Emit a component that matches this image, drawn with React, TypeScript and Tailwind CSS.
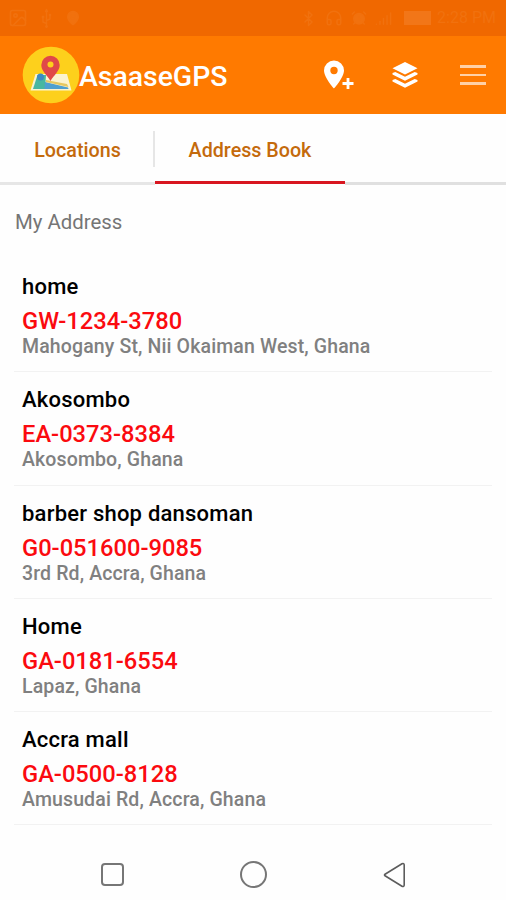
import { Bluetooth, Headphones, Image, MapPin, Signal, Usb, AlarmClock } from "lucide-react";

interface Address {
  name: string;
  code: string;
  street: string;
}

const addresses: Address[] = [
  { name: "home", code: "GW-1234-3780", street: "Mahogany St, Nii Okaiman West, Ghana" },
  { name: "Akosombo", code: "EA-0373-8384", street: "Akosombo, Ghana" },
  { name: "barber shop dansoman", code: "G0-051600-9085", street: "3rd Rd, Accra, Ghana" },
  { name: "Home", code: "GA-0181-6554", street: "Lapaz, Ghana" },
  { name: "Accra mall", code: "GA-0500-8128", street: "Amusudai Rd, Accra, Ghana" },
];

function StatusBar() {
  return (
    <div className="flex h-9 items-center justify-between bg-[#f06800] pl-2 pr-2.5 text-[#f27a1c]">
      <div className="flex items-center gap-2.5 opacity-50">
        <Image size={20} strokeWidth={2} />
        <Usb size={17} strokeWidth={2} className="-rotate-45" />
        <MapPin size={16} fill="currentColor" />
      </div>
      <div className="flex items-center opacity-50">
        <Bluetooth size={17} className="mr-2" />
        <Headphones size={18} className="mr-2" />
        <AlarmClock size={16} fill="currentColor" className="mr-2" />
        <Signal size={17} className="mr-3" />
        <div className="mr-1.5 h-3.5 w-[27px] bg-[#f58430]" />
        <span className="text-[16px] leading-none">2:28 PM</span>
      </div>
    </div>
  );
}

function Logo() {
  return (
    <svg width="58" height="58" viewBox="0 0 58 58" className="shrink-0">
      <circle cx="29" cy="29" r="28.3" fill="#fdd01c" />
      <path d="M13.500 28h31.500l4.500 16.500H8.500z" fill="#fbf3d0" />
      <path d="M15.500 29h8.500l-1 14H11z" fill="#48b7a0" />
      <circle cx="18.5" cy="31" r="3.5" fill="#3c8bc4" />
      <path d="M23 36l23 5.500.5 1.500H22.500z" fill="#4f9fd0" />
      <path d="M24 34l21 4 1.500 3L24 36z" fill="#e6c761" />
      <path d="M28.500 35C25 29 19.300 25 19.300 19a9.200 9.200 0 0 1 18.400 0c0 6-5.700 10-9.200 16z" fill="#e04848" />
      <circle cx="28.500" cy="18.500" r="3" fill="#fdd01c" />
    </svg>
  );
}

function Header() {
  return (
    <header className="flex h-[78px] items-center bg-[#ff7a00] pl-[22px] text-white">
      <Logo />
      <h1 className="w-[244px] pt-[5px] text-[28.400px] font-medium leading-none -indent-px">AsaaseGPS</h1>
      {/* add location */}
      <svg width="30" height="30" viewBox="0 0 30 30" fill="currentColor" className="shrink-0">
        <path
          fillRule="evenodd"
          d="M10 .5a10 10 0 0 0-10 10C0 17.500 10 28.500 10 28.500s10-11 10-18A10 10 0 0 0 10 .5zm0 6.300a3.700 3.700 0 1 1 0 7.400 3.700 3.700 0 0 1 0-7.400z"
        />
        <path d="M22.600 18h2.800v4.100h4.100v2.800h-4.100V29h-2.800v-4.100h-4.100v-2.800h4.100z" />
      </svg>
      {/* layers */}
      <svg width="26" height="28" viewBox="0 0 26 28" fill="currentColor" className="ml-[38px] shrink-0">
        <path d="M13 1l12.500 6.300L13 13.500.5 7.300z" />
        <path d="M.5 13.500V12l2.800-1 9.700 4.800L22.700 11l2.800 1v1.500L13 19.800z" />
        <path d="M.5 20.500V19l2.800-1 9.700 4.800 9.700-4.800 2.800 1v1.500L13 26.800z" />
      </svg>
      {/* menu */}
      <div className="ml-[42px] flex w-[26px] flex-col gap-[6px] opacity-65">
        <div className="h-[2.500px] bg-white" />
        <div className="h-[2.500px] bg-white" />
        <div className="h-[2.500px] bg-white" />
      </div>
    </header>
  );
}

function Tabs() {
  return (
    <nav className="flex h-[71px] text-[19.700px] font-medium text-[#c46a0c]">
      <div className="flex w-[155px] flex-col border-b-3 border-[#e6e6e6]">
        <div className="mt-[17px] flex h-9 items-center justify-center border-r-2 border-[#e6e6e6] pt-1 pl-0.5">Locations</div>
      </div>
      <div className="mb-px flex w-[190px] flex-col border-b-3 border-[#d81620]">
        <div className="mt-[17px] flex h-9 items-center justify-center pt-1">Address Book</div>
      </div>
      <div className="flex-1 border-b-3 border-[#e0e0e0]" />
    </nav>
  );
}

function AddressRow({ name, code, street }: Address) {
  return (
    <li className="h-[113.250px] border-b border-[#f2f2f2] pl-2 pt-3 font-medium">
      <p className="text-[22px] leading-8 tracking-[0.22px] text-black">{name}</p>
      <p className="pt-px text-[23.700px] leading-[34px] text-[#fb0a0f]">{code}</p>
      <p className="text-[19.500px] leading-[18px] tracking-[0.13px] text-[#808080]">{street}</p>
    </li>
  );
}

function NavBar() {
  return (
    <footer className="flex flex-1 items-center justify-between pl-[101px] pr-[100px] pt-6">
      <div className="size-[23px] rounded-[4px] border-2 border-[#767676]" />
      <div className="size-[27px] rounded-full border-2 border-[#767676]" />
      <svg width="23" height="26" viewBox="0 0 23 26" fill="none" stroke="#5c5c5c" strokeWidth="1.600" strokeLinejoin="round">
        <path d="M2 12.200L19 1.800c1.200-.7 2.200-.2 2.200 1.200v20c0 1.400-1 1.900-2.200 1.200L2 13.800q-1-.8 0-1.600z" />
      </svg>
    </footer>
  );
}

export default function App() {
  return (
    <div className="flex h-[900px] w-[506px] flex-col overflow-hidden bg-[#fefefe] font-['Roboto',sans-serif]">
      <StatusBar />
      <Header />
      <Tabs />
      <h2 className="h-[74px] pl-[15px] pt-[22px] text-[20.400px] leading-[30px] text-[#757575]">My Address</h2>
      <ul className="mx-[14px]">
        {addresses.map((address) => (
          <AddressRow key={address.code} {...address} />
        ))}
      </ul>
      <NavBar />
    </div>
  );
}
